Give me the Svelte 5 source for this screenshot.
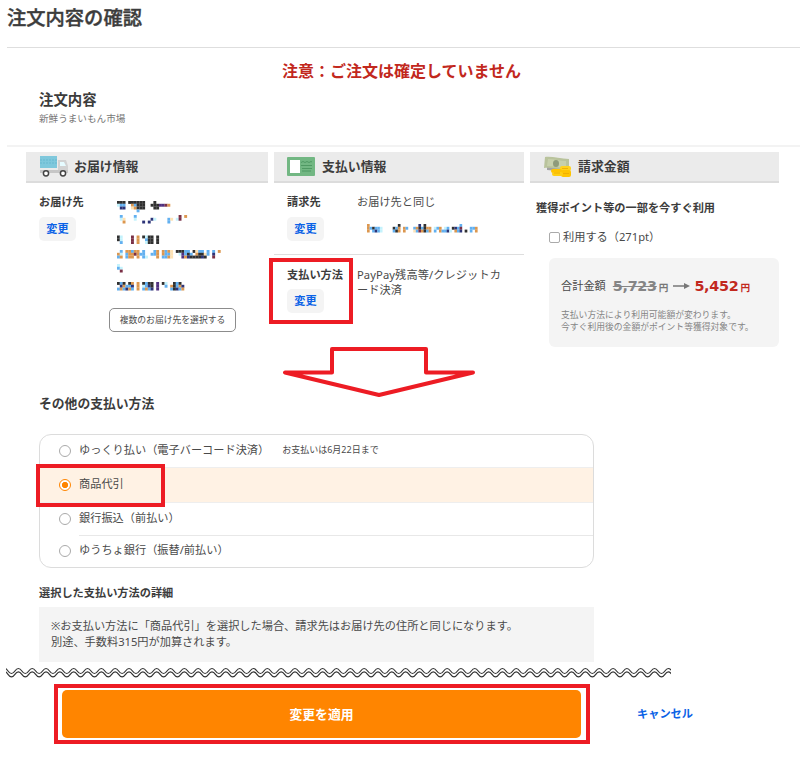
<script lang="ts">
	type Method = { id: string; label: string; note?: string };
	type Line = { y: number; rows: string[] };

	const methods: Method[] = [
		{ id: 'later', label: 'ゆっくり払い（電子バーコード決済）', note: 'お支払いは6月22日まで' },
		{ id: 'cod', label: '商品代引' },
		{ id: 'bank', label: '銀行振込（前払い）' },
		{ id: 'yucho', label: 'ゆうちょ銀行（振替/前払い）' }
	];

	let selected = $state('cod');
	let usePoints = $state(false);

	// masked personal data: one char = one mosaic tile
	const COLORS: Record<string, string> = {
		k: '#303030', b: '#62b0f0', c: '#c4f2fc', o: '#dc974f', y: '#fde2b4', n: '#2d3478', r: '#7a3046', p: '#50307f'
	};
	const address: Line[] = [
		{ y: 0, rows: ['kkk.kkkkkk...k', 'cbb..obkkk..kkkppro', '.nn..yokkk...kk', '.......b'] },
		{ y: 14, rows: ['.b....b...............r.o', '.cy...c.....nc....by.cr', '..o......n.n......b'] },
		{ y: 34.5, rows: ['kc...r.o.kckk.k', 'kc...r.o..bkk.k', '.b...r.o..ckk.k'] },
		{ y: 49, rows: ['.b.ooboo.b...bo.oboy.kkkbb.kybb.b.b.o', 'oc.boorobb..bbo.obby..cpbkb.okkyb.n', 'bo.boo.o.bc...o.bboy...ponkkkknk..r'] },
		{ y: 63, rows: ['c', 'bc', '.r'] },
		{ y: 81, rows: ['kbk.ko.o.kbkk.p.kc..kbk', '.nobbn.o.cbnk.p..b.okbon', 'bobnob.o.bobn.p....bknbo'] }
	];
	const email: Line[] = [
		{ y: 0, rows: ['o...........k.......n.k.............b'] },
		{ y: 2.8, rows: ['obkbbc....kbo.ob..bokbkoo.cbo.cb.knbr...bbo'] },
		{ y: 5.6, rows: ['o.bnbc....bko.o...ybrokbo.b.obbnc.obn.k.b.o'] }
	];
	const tiles = (lines: Line[], w: number) =>
		lines.flatMap((l) =>
			l.rows.flatMap((row, r) =>
				[...row].flatMap((c, i) => (COLORS[c] ? [{ x: i * w, y: l.y + r * 2.8, fill: COLORS[c] }] : []))
			)
		);

	// wavy cut line
	const PERIOD = 13.83;
	const wave = (y: number) => {
		let d = `M0 ${y - 2.5}L2 ${y}`;
		for (let i = 0; i < 48; i++) {
			const x = 2 + i * PERIOD;
			d += `Q${x + PERIOD / 4} ${y + 5} ${x + PERIOD / 2} ${y}T${x + PERIOD} ${y}`;
		}
		return d;
	};
</script>

{#snippet mosaic(lines: Line[], tile: number, w: number, h: number)}
	<svg width={w} height={h} viewBox="0 0 {w} {h}" aria-hidden="true">
		{#each tiles(lines, tile) as t}
			<rect x={t.x} y={t.y} width={tile + 0.1} height="2.9" fill={t.fill} />
		{/each}
	</svg>
{/snippet}

<div class="page">
	<header><h1>注文内容の確認</h1></header>
	<p class="notice">注意：ご注文は確定していません</p>

	<section class="shop">
		<h2>注文内容</h2>
		<p>新鮮うまいもん市場</p>
	</section>

	<div class="cols">
		<section class="col">
			<h3>
				<svg width="30" height="22" viewBox="0 0 30 22">
					<rect x="1" y="1" width="17" height="12" fill="#7fc8dc" />
					<path d="M1 5h17M1 8h17" stroke="#5fb3ca" stroke-dasharray="2 1" stroke-width=".7" />
					<path d="M19 5h8l2 6v7H19z" fill="#d2d2d2" />
					<path d="M21 7h4l2 4h-6z" fill="#e6fbff" />
					<rect x="1" y="15" width="28" height="3" fill="#c6c6c6" />
					<circle cx="7" cy="18.3" r="2.6" fill="#fff" stroke="#444" stroke-width="1.5" />
					<circle cx="24" cy="18.3" r="2.6" fill="#fff" stroke="#444" stroke-width="1.5" />
				</svg>
				お届け情報
			</h3>
			<div class="item addr">
				<div class="key"><b>お届け先</b><button class="mini">変更</button></div>
				<div class="val">
					{@render mosaic(address, 2.8, 106, 92)}
					<button class="multi">複数のお届け先を選択する</button>
				</div>
			</div>
		</section>

		<section class="col mid">
			<h3>
				<svg width="28" height="19" viewBox="0 0 28 19">
					<rect x="0" y="0" width="28" height="19" rx="1" fill="#72b783" />
					<rect x="3" y="3" width="10" height="13" fill="#fff" />
					<path d="M14 5.5l2-1 2 1 2-1 2 1 2-1 1 .5M14 8.500h11M15 11.500h10M15 14h9" fill="none" stroke="#4b9560" stroke-width=".9" />
				</svg>
				支払い情報
			</h3>
			<div class="item">
				<div class="key"><b>請求先</b><button class="mini">変更</button></div>
				<div class="val">
					お届け先と同じ
					<div class="email">{@render mosaic(email, 2.57, 112, 9)}</div>
				</div>
			</div>
			<div class="item method">
				<div class="key"><b>支払い方法</b><button class="mini">変更</button></div>
				<div class="val">PayPay残高等/クレジットカード決済</div>
				<div class="frame frame-method"></div>
			</div>
		</section>

		<section class="col bill">
			<h3>
				<svg width="30" height="24" viewBox="0 0 30 24">
					<path d="M4 9l22 1v8L4 16z" fill="#a3a3a3" />
					<path d="M2 3c7-1 15 2 24 2v11C17 16 9 13 1 14z" fill="#b9c39c" />
					<path d="M5 5c6 0 12 2 18 2v7c-6 0-12-2-19-2z" fill="#c7d0ac" />
					<ellipse cx="13" cy="9.5" rx="3" ry="3.5" fill="#8e9b7b" />
					<rect x="17" y="12" width="11" height="5" rx="2" fill="#ffd21e" />
					<rect x="8" y="15" width="11" height="4" rx="2" fill="#ffc400" />
					<rect x="18" y="16" width="10" height="7" rx="2" fill="#ffc400" />
					<rect x="9" y="18" width="11" height="4" rx="2" fill="#ffcf13" />
					<path d="M11 19h6M19 14.500h6M20 19.500h6" stroke="#eda900" stroke-width=".8" />
				</svg>
				請求金額
			</h3>
			<h4>獲得ポイント等の一部を今すぐ利用</h4>
			<label class="use"><input type="checkbox" bind:checked={usePoints} />利用する（271pt）</label>
			<div class="sum">
				<div class="total">
					<span>合計金額</span>
					<s>5,723</s><small>円</small>
					<svg width="17" height="8" viewBox="0 0 17 8"><path d="M0 4h12" stroke="#777" stroke-width="1.500" /><path d="M11 1l6 3-6 3z" fill="#777" /></svg>
					<strong>5,452</strong><small class="red">円</small>
				</div>
				<p>支払い方法により利用可能額が変わります。<br />今すぐ利用後の金額がポイント等獲得対象です。</p>
			</div>
		</section>
	</div>

	<svg class="arrow" width="194" height="54" viewBox="0 0 194 54">
		<path d="M49 4h94v23.500h47L96 50 2 27.500h47z" fill="#fff" stroke="#ed1c24" stroke-width="4" stroke-linejoin="round" />
	</svg>

	<section class="others">
		<h2>その他の支払い方法</h2>
		<div class="list">
			{#each methods as m (m.id)}
				<label class="row" class:on={selected === m.id}>
					<input type="radio" name="method" value={m.id} bind:group={selected} />
					<span class="text">{m.label}{#if m.note}<small>{m.note}</small>{/if}</span>
					{#if m.id === 'cod'}<span class="frame frame-cod"></span>{/if}
				</label>
			{/each}
		</div>
		<h4>選択した支払い方法の詳細</h4>
		<p class="detail">※お支払い方法に「商品代引」を選択した場合、請求先はお届け先の住所と同じになります。<br />別途、手数料315円が加算されます。</p>
	</section>

	<svg class="wave" width="665" height="12" viewBox="0 0 665 12">
		<path d={wave(4)} />
		<path d={wave(7.3)} />
	</svg>

	<footer>
		<div class="apply"><button>変更を適用</button></div>
		<a href="#cancel">キャンセル</a>
	</footer>
</div>

<style>
	:global(body) { background: #fff; }
	.page { width: 800px; height: 760px; overflow: hidden; box-sizing: border-box; font-family: "Noto Sans", "Noto Sans CJK JP", sans-serif; font-size: 11.2px; line-height: 16px; color: #4a4a4a; }
	.page * { box-sizing: border-box; }
	h1, h2, h3, h4, p { margin: 0; }
	button { font-family: inherit; padding: 0; cursor: pointer; }
	svg { display: block; flex-shrink: 0; }

	header { height: 48px; margin-left: 7px; border-bottom: 1px solid #dedede; }
	h1 { padding-top: 4px; font-size: 19.3px; line-height: 28px; font-weight: 500; -webkit-text-stroke: 0.4px #3c3c3c; color: #3c3c3c; }
	.notice { margin-top: 11px; padding-left: 282px; font-size: 16px; line-height: 24px; font-weight: 700; color: #c2281d; }

	.shop { height: 64px; margin-left: 7px; padding: 7px 0 0 32px; border-bottom: 2px solid #f3f3f3; }
	h2 { font-size: 14.4px; line-height: 20px; font-weight: 700; color: #3c3c3c; }
	.shop p { font-size: 9.6px; line-height: 18px; color: #777; }

	.cols { display: grid; grid-template-columns: 242px 250px 249px; gap: 6px; height: 195px; padding: 5px 0 0 26px; }
	h3 { display: flex; align-items: center; gap: 5px; height: 31px; padding: 0 0 1px 13px; background: #ebebeb; border-bottom: 2px solid #dcdcdc; font-size: 12.9px; font-weight: 700; color: #3c3c3c; }
	.mid h3 { gap: 7px; }
	.item { display: flex; height: 71px; padding: 11px 0 0 13px; }
	.key { width: 70px; flex-shrink: 0; }
	.key b { display: block; white-space: nowrap; color: #3c3c3c; }
	.mini { display: block; width: 37px; height: 24px; margin-top: 7px; border: 0; border-radius: 5px; background: #f4f4f4; color: #0b62e6; font-size: 11.2px; line-height: 22px; font-weight: 700; }
	.val { width: 146px; line-height: 16px; }
	.addr .val { padding: 7px 0 0 8px; }
	.multi { width: 127px; height: 24px; margin: 15px 0 0 -8px; border: 1px solid #8c8c8c; border-radius: 5px; background: #fff; color: #4a4a4a; font-size: 8.8px; line-height: 20px; white-space: nowrap; }
	.email { padding: 14px 0 0 10px; }
	.mid .method { position: relative; border-top: 1px solid #dedede; padding-top: 12px; }
	.mid .method .val { line-height: 15px; letter-spacing: 0.1px; }
	.mid .method .mini { margin-top: 6px; }

	.frame { position: absolute; border: 4px solid #ed1c24; pointer-events: none; }
	.frame-method { left: -5px; top: 3px; width: 84px; height: 66px; }
	.frame-cod { left: -4px; top: -4px; width: 129px; height: 43px; }

	h4 { font-size: 11.2px; line-height: 16px; font-weight: 700; color: #3c3c3c; }
	.bill h4 { margin: 17px 0 0 6px; }
	.use { display: flex; align-items: center; gap: 3px; margin: 13px 0 0 19px; }
	input { appearance: none; margin: 0; width: 11px; height: 11px; border: 1px solid #aaa; border-radius: 2px; background: #fff; flex-shrink: 0; }
	.sum { height: 89px; margin: 13px 0 0 19px; padding: 17px 0 0 12px; border-radius: 6px; background: #f4f4f4; }
	.total { display: flex; align-items: center; height: 22px; }
	.total s, .total strong { font-size: 14.4px; font-weight: 700; font-family: "DejaVu Sans", sans-serif; letter-spacing: -0.3px; }
	.total s { margin-left: 7px; color: #858585; }
	.total small { margin-left: 2px; padding-top: 3px; font-size: 9.6px; color: #777; font-weight: 700; }
	.total svg { margin: 0 4px 0 5px; }
	.total strong, .total .red { color: #c2281d; }
	.sum p { margin-top: 12px; font-size: 8.8px; line-height: 12px; color: #858585; white-space: nowrap; }

	.arrow { margin: 3px 0 0 283px; }
	.others { width: 555px; margin-left: 39px; }
	.others h2 { margin-top: -6px; font-size: 12.8px; }
	.list { height: 134px; margin-top: 21px; border: 1px solid #dcdcdc; border-radius: 12px; }
	.row { position: relative; display: flex; align-items: center; height: 32px; padding-left: 19px; gap: 8px; }
	.row input { width: 12px; height: 12px; border-radius: 50%; }
	.row input:checked { border-color: #ff8500; background: radial-gradient(#ff8500 2.8px, #fff 3.4px); }
	.text { display: flex; align-items: center; flex: 1; height: 100%; padding-bottom: 3px; }
	.text small { margin-left: 13px; font-size: 9px; }
	.row.on { height: 36px; background: #fff2e4; border-top: 1px solid #eee; border-bottom: 1px solid #eee; }
	.row:last-child .text { border-top: 1px solid #e8e8e8; }
	.others h4 { margin-top: 17px; }
	.detail { height: 55px; margin-top: 6px; padding: 11px 0 0 12px; background: #f4f4f4; line-height: 16px; white-space: nowrap; }

	.wave { margin: 5px 0 0 6px; }
	.wave path { fill: none; stroke: #333; stroke-width: 1.2; }

	footer { display: flex; align-items: center; gap: 47px; margin: 5px 0 0 54px; }
	.apply { width: 536px; height: 60px; padding: 2px 5px 2px 4px; border: 4px solid #ed1c24; }
	.apply button { display: block; width: 519px; height: 48px; border: 0; border-radius: 5px; background: #ff8500; color: #fff; font-size: 12.8px; font-weight: 700; line-height: 44px; }
	footer a { color: #0b62e6; font-weight: 700; text-decoration: none; }
</style>
